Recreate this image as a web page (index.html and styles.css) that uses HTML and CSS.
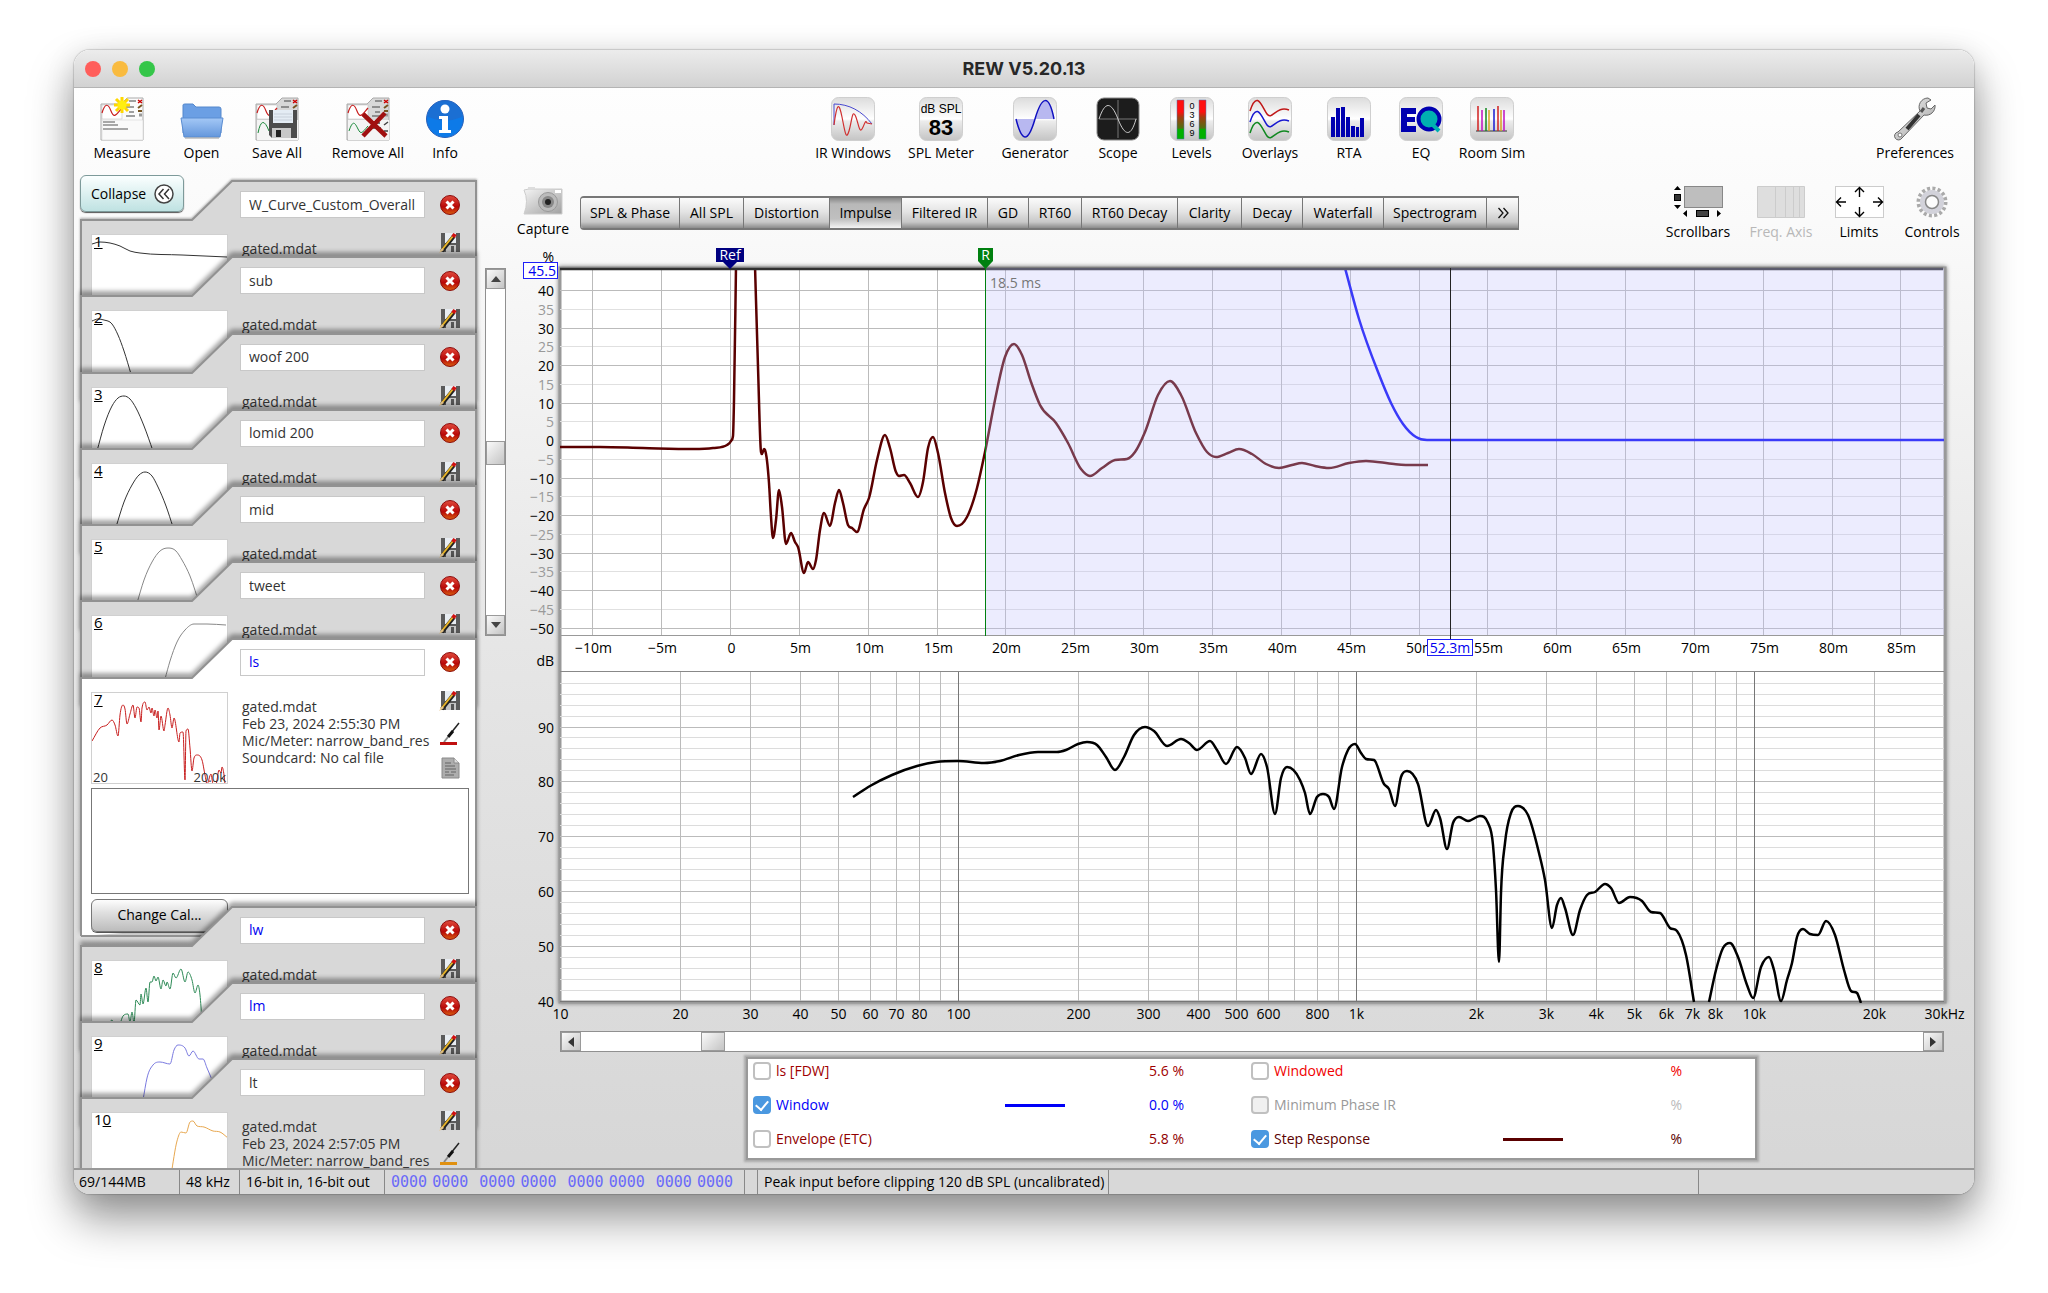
FILE: index.html
```html
<!DOCTYPE html>
<html lang="en">
<head>
    <meta charset="UTF-8" />
    <meta name="viewport" content="width=device-width, initial-scale=1.0" />
    <title>REW V5.20.13</title>
    <link rel="stylesheet" href="styles.css">
</head>
<body>
    <!-- Shared icons -->
    <svg class="sprite" width="0" height="0" aria-hidden="true">
        <defs>
            <linearGradient id="gTile" x1="0" y1="0" x2="0" y2="1">
                <stop offset="0" stop-color="#dcdcdc" /><stop offset="0.5" stop-color="#fff" /><stop offset="0.55" stop-color="#ececec" /><stop offset="1" stop-color="#c4c4c4" />
            </linearGradient>
            <linearGradient id="gBlue" x1="0" y1="0" x2="0" y2="1">
                <stop offset="0" stop-color="#a4c8f6" /><stop offset="1" stop-color="#6497dc" />
            </linearGradient>
            <linearGradient id="gMetal" x1="0" y1="0" x2="1" y2="1">
                <stop offset="0" stop-color="#f4f4f4" /><stop offset="1" stop-color="#a0a0a0" />
            </linearGradient>
            <linearGradient id="gLevel" x1="0" y1="0" x2="0" y2="1">
                <stop offset="0.3" stop-color="#ff1010" /><stop offset="0.45" stop-color="#a04010" /><stop offset="0.72" stop-color="#507010" /><stop offset="0.76" stop-color="#00b000" />
            </linearGradient>
            <linearGradient id="gRed" x1="0" y1="0" x2="0" y2="1">
                <stop offset="0" stop-color="#e04a3c" /><stop offset="0.6" stop-color="#b80808" /><stop offset="1" stop-color="#d86010" />
            </linearGradient>
        </defs>
        <symbol id="tile" viewBox="0 0 44 44"><rect x="0.5" y="0.5" width="43" height="43" rx="7" fill="url(#gTile)" stroke="#cfcfcf" /></symbol>
        <symbol id="close" viewBox="0 0 20 20">
            <circle cx="10" cy="10" r="9.5" fill="url(#gRed)" stroke="#8c0c0c" />
            <path d="M6.5 6.5 13.5 13.5M13.5 6.5 6.5 13.5" stroke="#fff" stroke-width="3" />
        </symbol>
        <symbol id="save" viewBox="0 0 22 21">
            <path d="M2 1H21V20H2Z" fill="#5a5a5a" /><path d="M6 1H17V11H6Z" fill="#e8edf2" /><path d="M7 13H17V20H7Z" fill="#c4c4c4" /><path d="M12 14H15V20H12Z" fill="#555" />
            <path d="M3 19 15 4" stroke="#222" stroke-width="4" /><path d="M2 19 14 4" stroke="#e8b428" stroke-width="2" />
            <path d="M14 5 16 2" stroke="#d01010" stroke-width="4" /><path d="M0 21 3 16 5 18Z" fill="#e8c890" />
        </symbol>
        <symbol id="brush" viewBox="0 0 22 24">
            <path d="M20 1 12 11" stroke="#222" stroke-width="1.500" /><path d="M14 9 9 15" stroke="#111" stroke-width="3" /><path d="M9 15 5 20" stroke="#888" stroke-width="2" />
            <rect x="1" y="20" width="17" height="3" fill="currentColor" />
        </symbol>
        <symbol id="note" viewBox="0 0 19 22">
            <path d="M1 1H13L18 6V21H1Z" fill="#adadad" stroke="#8a8a8a" /><path d="M13 1V6H18" fill="#ddd" stroke="#8a8a8a" />
            <path d="M4 6H10M4 9H14M4 12H15M4 15H8M10 15H15M4 18H13" stroke="#7c7c7c" stroke-width="1.500" />
        </symbol>
        <symbol id="sheet" viewBox="0 0 44 44">
            <path d="M1 7H21L27 1H43V43H1Z" fill="currentColor" stroke="#aaa" />
            <rect x="2" y="8" width="20" height="14" fill="#fff" stroke="#bbb" stroke-width="0.500" />
            <path d="M2 16C5 6 8 6 11 14S16 18 22 11" fill="none" stroke="#c81e1e" stroke-width="1.200" />
            <path d="M29 4H36M26 10H34M29 15H34M26 19H35" stroke="#444" stroke-width="1.200" />
            <path d="M38 3 42 6M42 3 38 6" stroke="#c00" stroke-width="1.500" /><path d="M38 11 42 8M38 14H42" stroke="#752" stroke-width="2" /><path d="M39 18H42" stroke="#999" stroke-width="3" />
        </symbol>
    </svg>

    <div class="window">
        <header class="titlebar">
            <div class="lights"><i class="red"></i><i class="amber"></i><i class="green"></i></div>
            <h1>REW V5.20.13</h1>
        </header>

        <nav class="toolbar">
            <div class="tools tools-file">
                <button type="button"><svg width="44" height="44" viewBox="0 0 44 44"><g color="#fbfbfb"><use href="#sheet" /></g><path d="M2 23H43V43H2Z" fill="#fafafa" stroke="#ccc" stroke-width="0.500" /><path d="M3 25H15M3 28H18M3 32H28" stroke="#555" stroke-width="1.200" /><path d="M22 0V16M14 8H30M16 2 28 14M28 2 16 14" stroke="#ffd800" stroke-width="3" /><circle cx="22" cy="8" r="4.500" fill="#ffee10" /></svg><span>Measure</span></button>
                <button type="button"><svg width="44" height="44" viewBox="0 0 44 44"><path d="M3 8Q3 7 5 7H13L16 10H39Q41 10 41 12V36H3Z" fill="#6b9fe4" stroke="#5588cc" /><path d="M1 21H43L40 40H4Z" fill="url(#gBlue)" stroke="#5b8dd2" /><path d="M5 41H39" stroke="#999" /></svg><span>Open</span></button>
                <button type="button"><svg width="44" height="44" viewBox="0 0 44 44"><g color="#d8d8d8"><use href="#sheet" /></g><path d="M2 23H43V43H2Z" fill="#f4f4f4" /><path d="M3 36Q7 16 14 34" fill="none" stroke="#188838" /><path d="M14 13H42V41H17L14 38Z" fill="#4c4c4c" /><path d="M18 13H38V26H18Z" fill="#e4ecf4" /><path d="M19 17H37M19 20H37M19 23H37" stroke="#c8d0da" /><path d="M17 31H36V41H17Z" fill="#c8c8c8" /><path d="M21 33H26V40H21Z" fill="#222" /></svg><span>Save All</span></button>
                <button type="button"><svg width="44" height="44" viewBox="0 0 44 44"><g color="#d8d8d8"><use href="#sheet" /></g><path d="M2 23H43V43H2Z" fill="#f4f4f4" /><path d="M3 34C7 22 9 26 12 32S16 36 22 29" fill="none" stroke="#188838" /><path d="M27 26H34M27 31H35M38 28 42 25M38 34H42" stroke="#444" stroke-width="1.500" /><path d="M17 17 40 39M39 16 17 39" stroke="#a01010" stroke-width="4.500" /></svg><span>Remove All</span></button>
                <button type="button"><svg width="44" height="44" viewBox="0 0 44 44"><circle cx="22" cy="22" r="18.500" fill="#0d7ae8" stroke="#2a60b8" /><path d="M5 20A17 17 0 0 1 39 20Q22 27 5 20" fill="#2468c4" opacity="0.600" /><circle cx="22" cy="12" r="4.500" fill="#fff" /><path d="M16 19H25V33H28V36H16V33H19V22H16Z" fill="#fff" /></svg><span>Info</span></button>
            </div>
            <div class="tools tools-views">
                <button type="button"><svg width="44" height="44" viewBox="0 0 44 44"><use href="#tile" /><path d="M3 28V7C18 7 31 14 41 27" fill="none" stroke="#4848d0" /><path d="M3 28C6 5 8 5 11 20S15 44 18 34 21 13 24 18 28 37 31 32 34 22 36 26L41 27" fill="none" stroke="#d03030" stroke-width="1.200" /></svg><span>IR Windows</span></button>
                <button type="button"><svg width="44" height="44" viewBox="0 0 44 44"><use href="#tile" /><text x="22" y="16" class="ic-small">dB SPL</text><text x="22" y="38" class="ic-big">83</text></svg><span>SPL Meter</span></button>
                <button type="button"><svg width="44" height="44" viewBox="0 0 44 44"><use href="#tile" /><path d="M3 22C9 46 15 46 22 22S36 -3 41 22Z" fill="#b8b8f0" /><path d="M3 22C9 46 15 46 22 22S36 -3 41 22" fill="none" stroke="#1010c0" stroke-width="1.500" /></svg><span>Generator</span></button>
                <button type="button"><svg width="44" height="44" viewBox="0 0 44 44"><rect x="1" y="1" width="42" height="42" rx="7" fill="#1c1c1c" stroke="#888" /><path d="M22 3V41M3 22H41" stroke="#777" /><path d="M3 22C9 4 15 4 22 22S35 40 40 22" fill="none" stroke="#ccc" /></svg><span>Scope</span></button>
                <button type="button"><svg width="44" height="44" viewBox="0 0 44 44"><use href="#tile" /><path d="M7 3H14V42H7ZM29 3H36V42H29Z" fill="url(#gLevel)" stroke="#5070b0" stroke-width="0.500" /><g class="ic-tiny"><text x="22" y="12">0</text><text x="22" y="21">3</text><text x="22" y="30">6</text><text x="22" y="39">9</text></g></svg><span>Levels</span></button>
                <button type="button"><svg width="44" height="44" viewBox="0 0 44 44"><use href="#tile" /><g fill="none" stroke-width="1.500"><path d="M2 14C9 -8 14 10 19 17S28 8 41 13" stroke="#c01818" /><path d="M2 25C9 3 14 21 19 28S28 19 41 24" stroke="#1818d0" /><path d="M2 36C9 14 14 32 19 39S28 30 41 35" stroke="#108820" /></g></svg><span>Overlays</span></button>
                <button type="button"><svg width="44" height="44" viewBox="0 0 44 44"><use href="#tile" /><path d="M4 20H8V40H4ZM9 11H13V40H9ZM14 10H18V40H14ZM19 20H23V40H19ZM24 29H28V40H24ZM29 30H32V40H29ZM33 21H37V40H33Z" fill="#0000b0" /></svg><span>RTA</span></button>
                <button type="button"><svg width="44" height="44" viewBox="0 0 44 44"><use href="#tile" /><path d="M2 11H17V17H8V20H16V25H8V29H17V35H2Z" fill="#0000b0" /><circle cx="30" cy="22" r="10.500" fill="#00b0b0" stroke="#0000b0" stroke-width="4" /><path d="M32 26 40 34" stroke="#00b0b0" stroke-width="4" /></svg><span>EQ</span></button>
                <button type="button"><svg width="44" height="44" viewBox="0 0 44 44"><use href="#tile" /><path d="M6 34H37" stroke="#333" /><path d="M8 9V34M28 9V34" stroke="#d02020" stroke-width="1.500" /><path d="M12 13V34M34 13V34" stroke="#c010c0" stroke-width="1.500" /><path d="M16 11V34" stroke="#108820" stroke-width="1.500" /><path d="M19 13V34M31 13V34" stroke="#d8a020" stroke-width="1.500" /><path d="M24 12V34" stroke="#1818d0" stroke-width="1.500" /></svg><span>Room Sim</span></button>
            </div>
            <div class="tools">
                <button type="button"><svg width="44" height="44" viewBox="0 0 44 44"><path d="M5 35 27 14A9 9 0 0 1 35 1L38 3 33 6 34 11 38 12 42 8A9 9 0 0 1 31 18L9 41A4 4 0 1 1 5 35Z" fill="url(#gMetal)" stroke="#666" /><path d="M14 32 26 18" stroke="#333" stroke-width="4" /><path d="M28 15 31 11" stroke="#555" stroke-width="3" /><circle cx="7" cy="38" r="2" fill="#fff" stroke="#777" /></svg><span>Preferences</span></button>
            </div>
        </nav>

        <div class="workspace">
            <aside class="sidebar">
                <button type="button" class="collapse">Collapse
                    <svg width="20" height="20" viewBox="0 0 20 20"><circle cx="10" cy="10" r="9" fill="#fff" stroke="#444" stroke-width="1.500" /><path d="M9.500 5 5 10 9.500 15M15 5 10.500 10 15 15" fill="none" stroke="#333" stroke-width="1.500" /></svg>
                </button>
                <div class="records" id="records"></div>
                <div class="scroll scroll-v">
                    <button type="button" aria-label="Scroll up"><svg width="10" height="6" viewBox="0 0 10 6"><path d="M0 6 5 0 10 6Z" fill="#444" /></svg></button>
                    <div class="track"><i></i></div>
                    <button type="button" aria-label="Scroll down"><svg width="10" height="6" viewBox="0 0 10 6"><path d="M0 0 5 6 10 0Z" fill="#444" /></svg></button>
                </div>
            </aside>

            <main class="content">
                <div class="topbar">
                    <button type="button" class="capture"><svg width="40" height="28" viewBox="0 0 40 28"><path d="M1 3Q6 14 1 27H39V2H6Z" fill="url(#gMetal)" stroke="#ccc" /><path d="M5 0H12V2H5Z" fill="#ddd" /><circle cx="25" cy="15" r="9.500" fill="#bbb" stroke="#999" /><circle cx="25" cy="15" r="6" fill="#888" /><circle cx="25" cy="15" r="3" fill="#222" /><rect x="32" y="3" width="6" height="3" fill="#fff" /></svg><span>Capture</span></button>
                    <div class="tabs">
                        <button type="button">SPL &amp; Phase</button><button type="button">All SPL</button><button type="button">Distortion</button><button type="button" class="active">Impulse</button><button type="button">Filtered IR</button><button type="button">GD</button><button type="button">RT60</button><button type="button">RT60 Decay</button><button type="button">Clarity</button><button type="button">Decay</button><button type="button">Waterfall</button><button type="button">Spectrogram</button><button type="button" aria-label="More graphs"><svg width="12" height="12" viewBox="0 0 12 12"><path d="M1.500 1 6 6 1.500 11M6.500 1 11 6 6.500 11" fill="none" stroke="#111" stroke-width="1.300" /></svg></button>
                    </div>
                    <div class="graph-tools">
                        <button type="button"><svg width="49" height="32" viewBox="0 0 49 32"><rect x="10.500" y="0.500" width="38" height="21" fill="#bebebe" stroke="#888" /><path d="M0 4 3.500 0 7 4ZM0 19H7L3.500 23ZM13 24V31L9 27.500ZM43 24 47 27.500 43 31Z" fill="#000" /><rect x="0.500" y="8.500" width="6" height="6" fill="#333" stroke="#000" /><rect x="22.500" y="24.500" width="12" height="6" fill="#444" stroke="#000" /></svg><span>Scrollbars</span></button>
                        <button type="button" disabled><svg width="49" height="32" viewBox="0 0 49 32"><path d="M0.500 0.500H47.500V31.500H0.500ZM18.500 0V32M28.500 0V32M36.500 0V32M42.500 0V32" fill="#dedede" stroke="#ccc" /></svg><span>Freq. Axis</span></button>
                        <button type="button"><svg width="49" height="32" viewBox="0 0 49 32"><rect x="0.500" y="0.500" width="48" height="31" fill="#fff" stroke="#ccc" /><path d="M24.500 11V2M20 6 24.500 1.500 29 6M24.500 21V30M20 26 24.500 30.500 29 26M11 16H2M6 11.500 1.500 16 6 20.500M38 16H47M43 11.500 47.500 16 43 20.500" fill="none" stroke="#000" stroke-width="1.400" /></svg><span>Limits</span></button>
                        <button type="button"><svg width="32" height="32" viewBox="0 0 32 32"><circle cx="16" cy="16" r="13.500" fill="none" stroke="#aaa" stroke-width="4" stroke-dasharray="3 2.300" /><circle cx="16" cy="16" r="9" fill="none" stroke="#d2d2da" stroke-width="6" /><circle cx="16" cy="16" r="6.500" fill="#fcfcfc" stroke="#888" stroke-width="1.500" /></svg><span>Controls</span></button>
                    </div>
                </div>

                <svg class="graph" id="graph" viewBox="512 240 1462 782" role="img" aria-label="Impulse response and SPL graphs"></svg>

                <div class="scroll scroll-h">
                    <button type="button" aria-label="Scroll left"><svg width="6" height="10" viewBox="0 0 6 10"><path d="M6 0 0 5 6 10Z" fill="#333" /></svg></button>
                    <div class="track"><i></i></div>
                    <button type="button" aria-label="Scroll right"><svg width="6" height="10" viewBox="0 0 6 10"><path d="M0 0 6 5 0 10Z" fill="#333" /></svg></button>
                </div>

                <div class="legend">
                    <label class="crimson"><input type="checkbox"><span>ls [FDW]</span><i></i><output>5.6 %</output></label>
                    <label class="bright"><input type="checkbox"><span>Windowed</span><i></i><output>%</output></label>
                    <label class="blue"><input type="checkbox" checked><span>Window</span><i class="line"></i><output>0.0 %</output></label>
                    <label class="off"><input type="checkbox" disabled><span>Minimum Phase IR</span><i></i><output>%</output></label>
                    <label class="brick"><input type="checkbox"><span>Envelope (ETC)</span><i></i><output>5.8 %</output></label>
                    <label class="maroon"><input type="checkbox" checked><span>Step Response</span><i class="line"></i><output>%</output></label>
                </div>
            </main>
        </div>

        <footer class="statusbar">
            <span>69/144MB</span>
            <span>48 kHz</span>
            <span>16-bit in, 16-bit out</span>
            <span class="bits"><b>0000</b><b>0000</b><b>0000</b><b>0000</b><b>0000</b><b>0000</b><b>0000</b><b>0000</b></span>
            <span></span>
            <span>Peak input before clipping 120 dB SPL (uncalibrated)</span>
            <span></span>
            <span></span>
        </footer>
    </div>

    <script src="script.js"></script>
</body>
</html>
```
FILE: styles.css
```css
* {
    box-sizing: border-box;
}
body {
    margin: 0;
    padding: 50px 74px 99px;
    background-color: #fff;
    font-family: "Open Sans", "Noto Sans", sans-serif;
    font-size: 14px;
    line-height: 18px;
    color: #000;
}
button, input, textarea {
    font: inherit;
    color: inherit;
}
button {
    padding: 0;
    border: 0;
    background: none;
    white-space: nowrap;
}
svg {
    display: block;
    flex-shrink: 0;
}
.sprite {
    position: absolute;
}
.window {
    display: flex;
    flex-direction: column;
    min-height: calc(100vh - 149px);
    border-radius: 16px;
    overflow: hidden;
    background: linear-gradient(#fff, #fafafa 15%, #e6e6e6 52%, #dcdcdc 80%, #d6d6d6);
    box-shadow: 0 0 1px 1px rgba(0, 0, 0, 0.15), 0 25px 45px rgba(0, 0, 0, 0.4), 0 5px 30px rgba(0, 0, 0, 0.12);
}

/* Title bar */
.titlebar {
    display: grid;
    grid-template-columns: 1fr auto 1fr;
    align-items: center;
    height: 38px;
    background: linear-gradient(#ececec, #d2d2d2);
    border-bottom: 1px solid #b4b4b4;
}
.titlebar h1 {
    margin: 0;
    font: bold 18px "Inter", sans-serif;
    color: #282828;
}
.lights {
    display: flex;
    gap: 11px;
    padding-left: 11px;
}
.lights i {
    width: 16px;
    height: 16px;
    border-radius: 50%;
}
.lights .red { background-color: #ff5e5b; }
.lights .amber { background-color: #f9bb40; }
.lights .green { background-color: #35c649; }

/* Main toolbar */
.toolbar {
    display: flex;
    justify-content: space-between;
    height: 82px;
    padding: 9px 20px 0 12px;
}
.tools {
    display: grid;
    align-items: start;
}
.tools-file {
    grid-template-columns: 72px 87px 64px 118px 36px;
}
.tools-views {
    grid-template-columns: 80px 96px 92px 74px 73px 84px 74px 70px 72px;
    margin-right: -2px;
}
.tools button, .capture, .graph-tools button {
    display: flex;
    flex-direction: column;
    align-items: center;
}
.tools button {
    gap: 3px;
}
.ic-small, .ic-big, .ic-tiny {
    font-family: "Liberation Sans", sans-serif;
    text-anchor: middle;
}
.ic-small { font-size: 12px; }
.ic-big { font-size: 22px; font-weight: bold; }
.ic-tiny { font-size: 9px; }

.workspace {
    display: grid;
    grid-template-columns: 438px 1fr;
    flex: 1;
}

/* Measurement list */
.sidebar {
    position: relative;
    display: flex;
    gap: 8px;
    padding: 10px 0 0 6px;
    overflow: hidden;
}
.collapse {
    position: absolute;
    z-index: 20;
    top: 5px;
    left: 6px;
    display: flex;
    align-items: center;
    gap: 8px;
    height: 37px;
    padding: 0 9px 0 10px;
    border: 1px solid #7d9a9a;
    border-radius: 6px;
    background: linear-gradient(#fbffff, #bfe2e2);
    box-shadow: 0 1px 1px #555;
}
.records {
    display: grid;
    grid-template-rows: repeat(6, 1fr) 268px repeat(2, 1fr) 110px;
    width: 397px;
    min-height: 980px;
}
.record {
    position: relative;
    display: grid;
    grid-template-columns: 137px 185px 26px;
    grid-template-rows: 27px 92px 106px 34px;
    column-gap: 12px;
    align-content: start;
    padding: 11px 0 0 11px;
    height: 0;
}
.record .shape {
    position: absolute;
    top: 0;
    left: 0;
    filter: drop-shadow(0 -4px 2px rgba(0, 0, 0, 0.35));
}
.record:first-child .shape {
    filter: drop-shadow(0 -1px 1px rgba(0, 0, 0, 0.3));
}
.shape path {
    fill: #d8d8d8;
    stroke: #929292;
    stroke-width: 2;
}
.record.open .shape path {
    fill: #fff;
}
.record > * {
    position: relative;
}
.record input {
    grid-column: 2;
    width: 100%;
    padding: 0 8px;
    border: 1px solid #c8c8c8;
    background-color: #fff;
    color: #333;
    outline: 0;
}
.record.linked input {
    color: #0000f0;
}
.record .close {
    grid-column: 3;
    align-self: center;
    justify-self: center;
}
.thumb {
    position: relative;
    height: 92px;
    margin-top: 16px;
    border: 1px solid #d0d0d0;
    background-color: #fff;
    overflow: hidden;
}
.thumb path {
    fill: none;
    stroke-width: 1;
}
.thumb span {
    position: absolute;
    left: 2px;
    top: -3px;
    font-size: 15px;
}
.thumb .lo, .thumb .hi {
    top: auto;
    bottom: -3px;
    left: 1px;
    font-size: 13px;
    color: #333;
}
.thumb .hi {
    left: auto;
    right: 1px;
}
.info {
    margin: 22px 0 0 2px;
    line-height: 17px;
    color: #333;
    white-space: nowrap;
}
.actions {
    display: grid;
    align-content: start;
    justify-items: center;
    gap: 11px;
    margin-top: 14px;
}
.record textarea {
    grid-column: 1 / 4;
    width: 378px;
    height: 106px;
    margin-top: 20px;
    border: 1px solid #777;
    background-color: #fff;
    resize: none;
}
.change {
    grid-column: 1;
    height: 33px;
    margin-top: 25px;
    border: 1px solid #777;
    border-radius: 6px;
    background: linear-gradient(#fdfdfd, #e0e0e0 40%, #bcbcbc);
    box-shadow: 0 1px 0 #555;
}

/* Scrollbars */
.scroll {
    display: flex;
    border: 1px solid #909090;
    background-color: #fff;
}
.scroll button, .track i {
    display: flex;
    align-items: center;
    justify-content: center;
    background: linear-gradient(135deg, #fafafa, #c4c4c4);
    border: 1px solid #9a9a9a;
}
.track {
    flex: 1;
    display: flex;
}
.scroll-v {
    flex-direction: column;
    width: 21px;
    height: 368px;
    margin-top: 88px;
}
.scroll-v button {
    height: 20px;
}
.scroll-v .track {
    padding-top: 152px;
}
.scroll-v .track i {
    width: 100%;
    height: 24px;
}
.scroll-h {
    height: 21px;
    margin: 9px 30px 0 48px;
}
.scroll-h button {
    width: 20px;
}
.scroll-h .track i {
    width: 24px;
    margin-left: 120px;
}

/* Graph area */
.content {
    display: flex;
    flex-direction: column;
    min-width: 0;
}
.topbar {
    display: flex;
    align-items: flex-start;
    height: 70px;
    padding: 0 8px 0 5px;
}
.capture {
    width: 52px;
    margin-top: 17px;
    gap: 5px;
}
.tabs {
    display: grid;
    grid-template-columns: 99px 64px 86px 72px 86px 41px 53px 96px 64px 61px 81px 103px 31px;
    height: 34px;
    margin: 26px auto 0 11px;
    border: 1px solid #777;
    border-top-width: 2px;
    border-bottom-width: 2px;
    border-radius: 4px 0 0 4px;
    overflow: hidden;
}
.tabs button {
    display: flex;
    align-items: center;
    justify-content: center;
    border-right: 1px solid #777;
    background: linear-gradient(#fbfbfb, #e4e4e4 45%, #c8c8c8 80%, #8c8c8c);
}
.tabs button:last-child {
    border-right: 0;
}
.tabs .active {
    background: linear-gradient(#888, #b8b8b8 20%, #c0c0c0 70%, #f4f4f4);
}
.graph-tools {
    display: grid;
    grid-template-columns: 88px 78px 78px 68px;
    margin-top: 16px;
}
.graph-tools button {
    gap: 5px;
}
.graph-tools button:disabled {
    color: #b8b8b8;
}
.graph {
    width: 100%;
    height: auto;
}
.graph text {
    font-size: 14px;
}
.graph .minor {
    fill: #999;
}
.graph .end {
    text-anchor: end;
}
.graph .mid {
    text-anchor: middle;
}
.graph .cursor {
    fill: #0000f0;
}
.frame {
    fill: #fff;
    stroke: #999;
    stroke-width: 3;
    filter: drop-shadow(0 0 2px #777);
}

/* Trace legend */
.legend {
    display: grid;
    grid-template-columns: 498px 1fr;
    grid-auto-rows: 24px;
    row-gap: 10px;
    width: 1011px;
    height: 103px;
    margin: 5px 0 8px 234px;
    padding: 0 5px;
    border: 2px solid #999;
    background-color: #fff;
    box-shadow: 0 0 2px 2px #aaa;
}
.legend label {
    display: grid;
    grid-template-columns: 18px 234px 60px 119px;
    align-items: center;
}
.legend label span {
    padding-left: 5px;
}
.legend output {
    text-align: right;
}
.legend .line {
    height: 3px;
    background-color: currentColor;
}
.legend input {
    appearance: none;
    width: 18px;
    height: 18px;
    margin: 0;
    border: 2px solid #c0c0c0;
    border-radius: 4px;
    background-color: #fff;
}
.legend input:disabled {
    background-color: #f0f0f0;
}
.legend input:checked {
    border-color: #4a98e0;
    background-color: #4a98e0;
    display: grid;
    place-items: center;
}
.legend input:checked::after {
    content: "";
    width: 6px;
    height: 10px;
    margin-bottom: 2px;
    border: solid #fff;
    border-width: 0 2px 2px 0;
    transform: rotate(40deg);
}
.crimson { color: #a00000; }
.bright { color: #f00000; }
.blue { color: #0000f8; }
.off { color: #999; }
.off output { color: #bbb; }
.brick { color: #900000; }
.maroon { color: #5a0000; }

/* Status bar */
.statusbar {
    display: grid;
    grid-template-columns: 106px 60px 145px 360px 13px 351px 590px 1fr;
    height: 26px;
    border-top: 2px solid #999;
    background-color: #d8d8d8;
    line-height: 24px;
    white-space: nowrap;
}
.statusbar > span {
    padding-left: 6px;
    border-right: 1px solid #888;
}
.statusbar > span:first-child {
    padding-left: 5px;
}
.statusbar > span:last-child {
    border-right: 0;
}
.bits {
    display: flex;
    gap: 5px;
    color: #6a6af8;
}
.bits b {
    font: 15px/24px "DejaVu Sans Mono", monospace;
}
.bits b:nth-child(even) {
    margin-right: 6px;
}
```
FILE: script.js
```js
// Smooth path through the points, flat at the peaks and dips
function curve(flat) {
    const p = [];
    for (let i = 0; i < flat.length; i += 2) p.push([flat[i], flat[i + 1]]);
    const n = p.length;
    const slope = [], gap = [];
    for (let i = 0; i < n - 1; i++) {
        gap.push(p[i + 1][0] - p[i][0]);
        slope.push((p[i + 1][1] - p[i][1]) / gap[i]);
    }
    const m = p.map((_, i) => {
        if (i === 0) return slope[0];
        if (i === n - 1) return slope[n - 2];
        const a = slope[i - 1], b = slope[i];
        if (a * b <= 0) return 0;
        const mean = (a * gap[i] + b * gap[i - 1]) / (gap[i - 1] + gap[i]);
        return Math.sign(a) * Math.min(Math.abs(a) * 3, Math.abs(b) * 3, Math.abs(mean));
    });
    let d = `M${p[0][0]} ${p[0][1]}`;
    for (let i = 0; i < n - 1; i++) {
        const h = gap[i] / 3;
        d += `C${p[i][0] + h} ${p[i][1] + m[i] * h} ${p[i + 1][0] - h} ${p[i + 1][1] - m[i + 1] * h} ${p[i + 1][0]} ${p[i + 1][1]}`;
    }
    return d;
}

// ---- Measurement list ----
const records = [
    { name: "W_Curve_Custom_Overall", color: "#333", pts: [0, 9, 8, 7, 18, 8, 28, 11, 38, 16, 48, 18, 90, 20, 135, 22] },
    { name: "sub", color: "#333", pts: [0, 10, 6, 8, 12, 9, 20, 13, 26, 24, 32, 40, 39, 63] },
    { name: "woof 200", color: "#333", pts: [5, 63, 12, 38, 20, 18, 26, 10, 32, 8, 38, 11, 44, 20, 52, 38, 61, 63] },
    { name: "lomid 200", color: "#333", pts: [24, 63, 32, 38, 40, 21, 47, 11, 53, 8, 60, 12, 66, 23, 74, 42, 81, 63] },
    { name: "mid", color: "#888", pts: [45, 63, 52, 40, 60, 22, 68, 11, 76, 8, 84, 11, 90, 20, 98, 36, 108, 66] },
    { name: "tweet", color: "#888", pts: [73, 63, 78, 45, 85, 26, 93, 14, 102, 8, 115, 8, 134, 9] },
    { name: "ls", color: "#c81e1e", linked: true, open: true, pts: [0, 48, 8, 35, 15, 32, 20, 27, 23, 32, 26, 43, 28, 22, 31, 12, 33, 16, 35, 31, 38, 21, 41, 12, 43, 25, 45, 14, 47, 15, 49, 29, 50, 15, 53, 9, 55, 17, 57, 14, 59, 20, 60, 15, 62, 23, 63, 17, 65, 25, 66, 18, 67, 37, 69, 23, 72, 38, 73, 32, 76, 15, 78, 22, 80, 35, 82, 25, 87, 49, 88, 40, 91, 39, 93, 87, 94, 38, 96, 36, 98, 55, 100, 78, 102, 65, 105, 62, 110, 67, 113, 82, 115, 91, 119, 81, 121, 91, 124, 91, 127, 77, 129, 80, 130, 74, 132, 82, 133, 91] },
    { name: "lw", color: "#2e8b57", linked: true, pts: [17, 62, 20, 59, 22, 64, 27, 64, 31, 55, 36, 53, 38, 61, 40, 51, 42, 62, 44, 39, 48, 44, 49, 33, 51, 43, 54, 27, 56, 41, 58, 21, 60, 21, 62, 15, 64, 20, 66, 16, 69, 28, 71, 19, 74, 25, 75, 21, 78, 28, 81, 12, 84, 17, 89, 8, 93, 21, 96, 11, 100, 19, 103, 32, 106, 24, 108, 34, 110, 60] },
    { name: "lm", color: "#7a7ae0", linked: true, pts: [51, 63, 55, 41, 61, 28, 68, 25, 78, 27, 82, 13, 86, 8, 93, 11, 97, 19, 101, 14, 107, 22, 111, 22, 115, 31, 121, 45] },
    { name: "lt", color: "#e8a850", date: "2:57:05", pts: [79, 62, 85, 28, 89, 19, 94, 20, 98, 9, 101, 8, 105, 13, 112, 14, 121, 18, 128, 19, 136, 25] },
];

document.getElementById("records").innerHTML = records.map((r, i) => {
    const num = i + 1;
    const label = num < 10 ? `<u>${num}</u>` : "1<u>0</u>";
    const h = r.open ? 299 : 150;
    const more = r.open || r.date;
    return `<section class="record${r.open ? " open" : ""}${r.linked ? " linked" : ""}">
        <svg class="shape" width="397" height="${h}"><path d="M1 ${h - 1}V40H112L152 1H396V${r.open ? h - 30 : h}${r.open ? `M1 ${h - 1}H160` : ""}" /></svg>
        <input type="text" value="${r.name}" aria-label="Measurement ${num} name">
        <button type="button" class="close" aria-label="Remove"><svg width="20" height="20"><use href="#close" /></svg></button>
        <div class="thumb"><svg width="136" height="91"><path d="${curve(r.pts)}" stroke="${r.color}" /></svg><span>${label}</span>${r.open ? '<span class="lo">20</span><span class="hi">20.0k</span>' : ""}</div>
        <div class="info">gated.mdat${more ? `<br>Feb 23, 2024 ${r.date || "2:55:30"} PM<br>Mic/Meter: narrow_band_res` : ""}${r.open ? "<br>Soundcard: No cal file" : ""}</div>
        <div class="actions"><svg width="22" height="21"><use href="#save" /></svg>${more ? `<svg width="22" height="24" color="${r.open ? "#c01010" : "#e09010"}"><use href="#brush" /></svg>` : ""}${r.open ? '<svg width="19" height="22"><use href="#note" /></svg>' : ""}</div>
        ${r.open ? '<textarea aria-label="Notes"></textarea><button type="button" class="change">Change Cal...</button>' : ""}
    </section>`;
}).join("");

// ---- Graphs ----
const step = [
    [560, 447, 600, 447, 643, 448, 693, 449, 713, 448, 727, 445, 731, 441, 733, 436, 734, 400, 736, 266],
    [755, 266, 758, 367, 761, 452, 762, 454, 764, 449, 765, 450, 769, 483, 771, 517, 773, 538, 776, 520, 779, 490, 782, 507, 786, 544, 791, 533, 795, 542, 798, 547, 804, 573, 808, 562, 813, 569, 816, 560, 820, 530, 824, 513, 830, 526, 835, 503, 839, 490, 843, 503, 848, 525, 852, 528, 857, 532, 864, 509, 869, 498, 877, 460, 885, 435, 890, 448, 896, 472, 899, 476, 904, 475, 910, 483, 918, 497, 923, 482, 928, 448, 933, 437, 938, 453, 945, 493, 951, 518, 957, 526, 967, 517, 977, 488, 985, 452, 995, 400, 1005, 357, 1014, 344, 1022, 355, 1031, 382, 1040, 405, 1056, 423, 1068, 443, 1081, 469, 1090, 476, 1102, 468, 1115, 460, 1127, 459, 1135, 452, 1145, 432, 1158, 395, 1170, 381, 1181, 395, 1196, 433, 1207, 452, 1216, 457, 1228, 453, 1239, 449, 1252, 454, 1266, 464, 1279, 468, 1292, 465, 1302, 463, 1315, 466, 1329, 468, 1349, 463, 1366, 461, 1394, 464, 1413, 465, 1428, 465],
];
const windowTrace = [1345, 268, 1359, 319, 1378, 372, 1391, 403, 1403, 424, 1416, 437, 1427, 440, 1944, 440];
const spl = [
    [853, 797, 870, 786, 892, 775, 917, 766, 936, 762, 958, 761, 984, 763, 1000, 761, 1019, 755, 1038, 752, 1057, 752, 1066, 750, 1078, 744, 1087, 742, 1097, 745, 1106, 757, 1115, 770, 1124, 757, 1134, 735, 1145, 727, 1154, 731, 1167, 746, 1181, 739, 1189, 743, 1197, 750, 1210, 741, 1217, 750, 1226, 764, 1237, 747, 1245, 758, 1251, 774, 1261, 754, 1267, 767, 1275, 814, 1281, 778, 1287, 767, 1300, 780, 1305, 793, 1310, 814, 1317, 797, 1323, 794, 1329, 797, 1334, 809, 1342, 767, 1348, 750, 1355, 744, 1361, 753, 1366, 759, 1374, 760, 1384, 784, 1389, 789, 1395, 806, 1401, 777, 1407, 771, 1418, 784, 1428, 826, 1436, 810, 1440, 818, 1447, 849, 1453, 823, 1459, 817, 1468, 821, 1480, 816, 1488, 823, 1493, 845, 1496, 890, 1499, 962, 1501, 893, 1505, 843, 1511, 813, 1518, 806, 1528, 815, 1539, 853, 1545, 880, 1552, 928, 1557, 905, 1561, 898, 1565, 908, 1573, 935, 1580, 910, 1587, 895, 1595, 892, 1605, 884, 1611, 888, 1619, 903, 1630, 897, 1642, 901, 1651, 912, 1660, 913, 1670, 928, 1677, 931, 1686, 955, 1694, 1002],
    [1709, 1002, 1716, 970, 1723, 948, 1730, 943, 1738, 957, 1747, 985, 1753, 998, 1761, 967, 1769, 957, 1774, 970, 1781, 1001, 1787, 980, 1792, 963, 1797, 937, 1803, 929, 1810, 934, 1818, 935, 1826, 921, 1835, 935, 1844, 970, 1851, 991, 1857, 993, 1861, 1003],
];

let out = `<rect class="frame" x="560" y="268" width="1385" height="734" />`;
const line = (x1, y1, x2, y2, c) => `<path d="M${x1} ${y1}L${x2} ${y2}" stroke="${c}" />`;
const crisp = v => Math.round(v) + 0.5;

// Impulse grid: percent against time
for (let v = 40; v >= -50; v -= 5) {
    const major = v % 10 === 0;
    const y = crisp(440 - v * 3.75);
    out += line(560, y, 1944, y, major ? "#bbb" : "#e0e0e0");
    out += `<text class="end${major ? "" : " minor"}" x="554" y="${y + 5}">${String(v).replace("-", "−")}</text>`;
}
for (let t = -10; t <= 85; t += 5) {
    const x = crisp(730 + t * 13.77);
    out += line(x, 269, x, 635, "#bbb");
    out += `<text class="mid" x="${x + 1}" y="653">${t ? String(t).replace("-", "−") + "m" : 0}</text>`;
}
out += `<clipPath id="top"><rect x="560" y="269" width="1384" height="367" /></clipPath>`;
out += `<g clip-path="url(#top)" fill="none" stroke="#5a0000" stroke-width="2.5">${step.map(s => `<path d="${curve(s)}" />`).join("")}
    <path d="${curve(windowTrace)}" stroke="#0000f8" stroke-width="2.5" /></g>`;
out += `<path d="M560 269H1943" stroke="#303030" stroke-width="2.5" />`;
out += `<rect x="985" y="268" width="959" height="367" fill="rgb(193,193,253)" fill-opacity="0.3" />`;
out += line(560, 635.5, 1944, 635.5, "#999");
out += line(985.5, 262, 985.5, 636, "#008010") + line(1450.5, 268, 1450.5, 639, "#222");
out += `<path d="M716 248H744V262H737L730 269 723 262H716Z" fill="#000080" /><text class="mid" x="730" y="260" fill="#fff">Ref</text>`;
out += `<path d="M978 248H993V261L985.5 269 978 261Z" fill="#008010" /><text class="mid" x="985.5" y="260" fill="#fff">R</text>`;
out += `<text x="990" y="288" fill="#777">18.5 ms</text>`;
out += `<text class="end" x="554" y="262">%</text><text class="end" x="554" y="666">dB</text>`;
out += `<rect x="523.5" y="262.5" width="34" height="16" fill="#fff" stroke="#2020f8" /><text class="end cursor" x="556" y="276">45.5</text>`;
out += `<rect x="1427.5" y="639.5" width="45" height="16" fill="#fff" stroke="#2020f8" /><text class="mid cursor" x="1450" y="653">52.3m</text>`;

// SPL grid: level against log frequency
for (let v = 98; v >= 40; v -= 2) {
    const major = v % 10 === 0;
    const y = crisp(1001 - (v - 40) * 5.49);
    out += line(560, y, 1944, y, major ? "#bbb" : "#dcdcdc");
    if (major) out += `<text class="end" x="554" y="${y + 5}">${v}</text>`;
}
const named = { 10: "10", 20: "20", 30: "30", 40: "40", 50: "50", 60: "60", 70: "70", 80: "80", 100: "100", 200: "200", 300: "300", 400: "400", 500: "500", 600: "600", 800: "800", 1000: "1k", 2000: "2k", 3000: "3k", 4000: "4k", 5000: "5k", 6000: "6k", 7000: "7k", 8000: "8k", 10000: "10k", 20000: "20k", 30000: "30kHz" };
for (let dec = 10; dec <= 10000; dec *= 10) {
    for (let k = 1; k < 10 && k * dec <= 30000; k++) {
        const x = crisp(560 + Math.log10(k * dec / 10) * 398);
        if (x > 561 && x < 1943) out += line(x, 671, x, 1001, k === 1 ? "#777" : "#bbb");
        if (named[k * dec]) out += `<text class="mid" x="${x}" y="1019">${named[k * dec]}</text>`;
    }
}
out += line(560, 671.5, 1944, 671.5, "#888") + line(560, 1001.5, 1944, 1001.5, "#777");
out += `<clipPath id="low"><rect x="560" y="671" width="1384" height="332" /></clipPath>`;
out += `<g clip-path="url(#low)" fill="none" stroke="#000" stroke-width="2.5" stroke-linejoin="round">${spl.map(s => `<path d="${curve(s)}" />`).join("")}</g>`;

document.getElementById("graph").innerHTML = out;
```
